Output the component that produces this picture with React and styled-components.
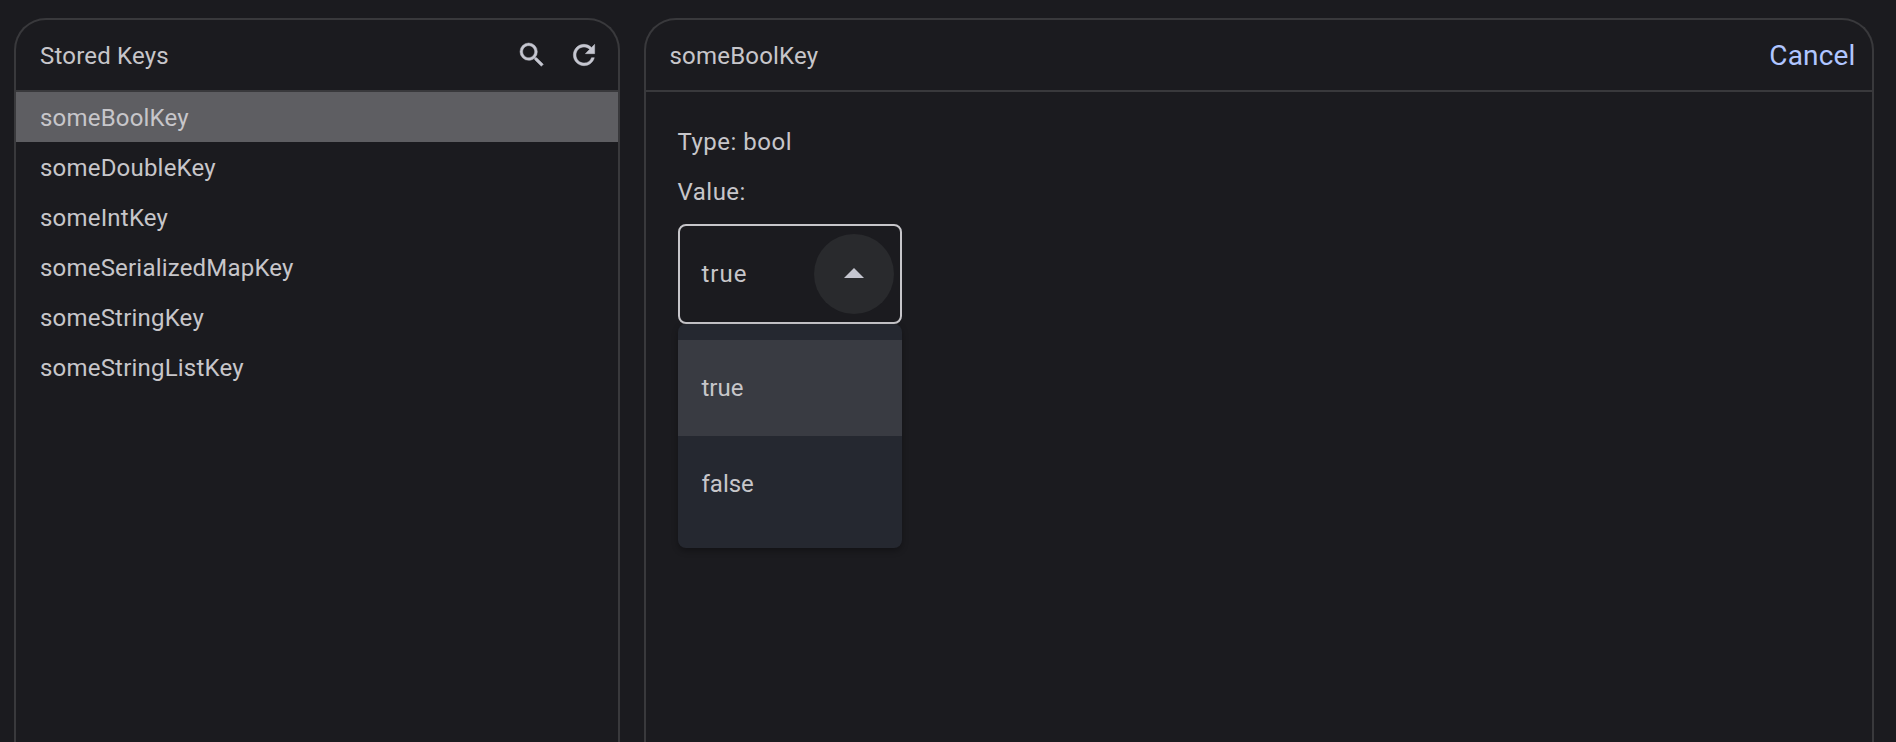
import React from 'react';
import styled, { createGlobalStyle } from 'styled-components';

const GlobalStyle = createGlobalStyle`
  * { box-sizing: border-box; }
  body {
    margin: 0;
    background: #1b1b1f;
    color: #c7c6ca;
    font-family: Roboto, sans-serif;
    font-size: 24px;
    line-height: 28px;
  }
`;

const Page = styled.main`
  display: flex;
  gap: 24px;
  height: 742px;
  padding: 18px 22.5px 0 14px;
`;

const Panel = styled.section`
  flex: ${(p) => (p.$width ? `0 0 ${p.$width}` : '1 1 0')};
  height: 724px;
  border: 2px solid #39393c;
  border-bottom: 0;
  border-radius: 32px 32px 0 0;
`;

const Header = styled.header`
  display: flex;
  align-items: center;
  height: 72px;
  padding: 0 16px 0 24px;
  border-bottom: 2px solid #39393c;
`;

const Title = styled.h1`
  flex: 1;
  margin: 0;
  padding-top: 1px;
  font-size: 24px;
  font-weight: 400;
  letter-spacing: 0.2px;
`;

const Actions = styled.div`
  display: flex;
  gap: 20px;
  padding-right: 2px;
`;

const IconButton = styled.button`
  display: flex;
  padding: 0;
  border: 0;
  background: none;
  color: #c5c6d0;
`;

const Icon = styled.svg`
  display: block;
  width: ${(p) => p.$size}px;
  height: ${(p) => p.$size}px;
  fill: currentColor;
  stroke: currentColor;
  stroke-width: ${(p) => p.$weight || 0};
`;

const CancelButton = styled.button`
  padding: 2px 0 0;
  border: 0;
  background: none;
  color: #b0c6ff;
  font-family: inherit;
  font-size: 28px;
  line-height: 34px;
  letter-spacing: 0.15px;
`;

const KeyList = styled.ul`
  margin: 0;
  padding: 0;
  list-style: none;
`;

const KeyRow = styled.li`
  height: 50px;
  padding: 12px 24px 0;
  letter-spacing: 0.2px;
  background: ${(p) => (p.$selected ? '#5e5e62' : 'transparent')};
`;

const Details = styled.div`
  padding: 36px 32px;
`;

const Field = styled.p`
  height: 50px;
  margin: 0;
  letter-spacing: 0.5px;
`;

const Select = styled.div`
  display: flex;
  align-items: center;
  justify-content: space-between;
  width: 224px;
  height: 100px;
  margin-top: -4px;
  padding: 0 6px 0 22px;
  border: 2px solid #c7c6ca;
  border-radius: 8px;
  letter-spacing: 1px;
`;

const Toggle = styled(IconButton)`
  align-items: center;
  justify-content: center;
  width: 80px;
  height: 80px;
  border-radius: 50%;
  background: #292a2d;
`;

const Menu = styled.ul`
  width: 224px;
  height: 224px;
  margin: 0;
  padding: 16px 0;
  border-radius: 8px;
  background: #252830;
  box-shadow: 0 3px 6px rgba(0, 0, 0, 0.3);
  list-style: none;
`;

const Option = styled.li`
  display: flex;
  align-items: center;
  height: 96px;
  padding: 0 24px;
  background: ${(p) => (p.$selected ? '#393b42' : 'transparent')};
`;

const keys = [
  'someBoolKey',
  'someDoubleKey',
  'someIntKey',
  'someSerializedMapKey',
  'someStringKey',
  'someStringListKey',
];

export default function App() {
  const selected = 'someBoolKey';
  return (
    <>
      <GlobalStyle />
      <Page>
        <Panel $width="605.5px">
          <Header>
            <Title>Stored Keys</Title>
            <Actions>
              <IconButton aria-label="Search">
                <Icon $size={32} $weight={0.35} viewBox="0 0 24 24">
                  <path d="M15.5 14h-.79l-.28-.27A6.471 6.471 0 0 0 16 9.5 6.5 6.5 0 1 0 9.5 16c1.61 0 3.09-.59 4.23-1.57l.27.28v.79l5 4.99L20.49 19l-4.99-5zm-6 0C7.01 14 5 11.99 5 9.5S7.01 5 9.5 5 14 7.01 14 9.5 11.99 14 9.5 14z" />
                </Icon>
              </IconButton>
              <IconButton aria-label="Refresh">
                <Icon $size={32} $weight={0.35} viewBox="0 0 24 24">
                  <path d="M17.65 6.35A7.958 7.958 0 0 0 12 4c-4.42 0-7.99 3.58-7.99 8s3.57 8 7.99 8c3.73 0 6.84-2.55 7.73-6h-2.08A5.99 5.99 0 0 1 12 18c-3.31 0-6-2.69-6-6s2.69-6 6-6c1.66 0 3.14.69 4.22 1.78L13 11h7V4l-2.35 2.35z" />
                </Icon>
              </IconButton>
            </Actions>
          </Header>
          <KeyList>
            {keys.map((key) => (
              <KeyRow key={key} $selected={key === selected}>{key}</KeyRow>
            ))}
          </KeyList>
        </Panel>
        <Panel>
          <Header>
            <Title>{selected}</Title>
            <CancelButton>Cancel</CancelButton>
          </Header>
          <Details>
            <Field>Type: bool</Field>
            <Field>Value:</Field>
            <Select>
              true
              <Toggle aria-label="Close menu">
                <Icon $size={48} viewBox="0 0 24 24">
                  <path d="M7 14l5-5 5 5z" />
                </Icon>
              </Toggle>
            </Select>
            <Menu>
              <Option $selected>true</Option>
              <Option>false</Option>
            </Menu>
          </Details>
        </Panel>
      </Page>
    </>
  );
}
